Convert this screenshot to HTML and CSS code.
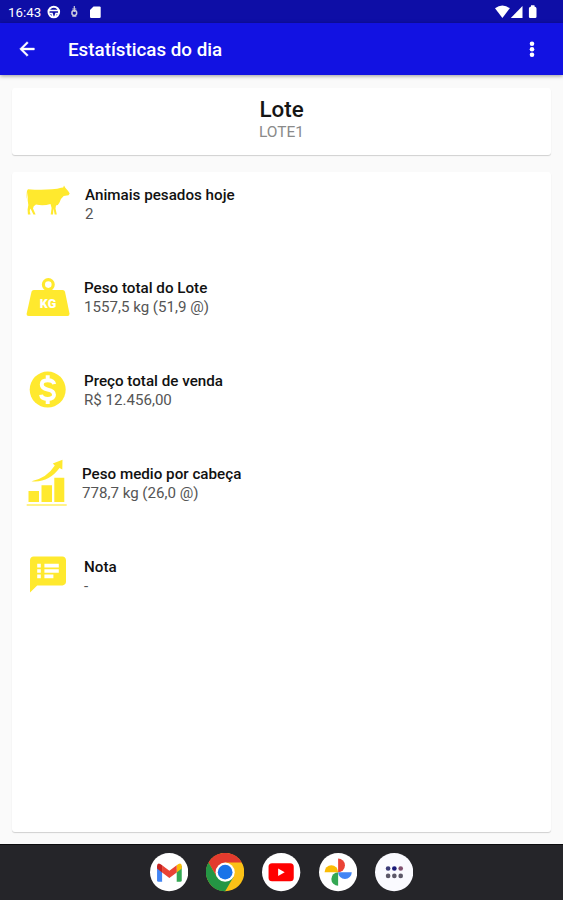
FILE: index.html
```html
<!DOCTYPE html>
<html lang="pt-BR">
<head>
    <meta charset="UTF-8">
    <meta name="viewport" content="width=device-width, initial-scale=1.0">
    <title>Estatísticas do dia</title>
    <link rel="stylesheet" href="styles.css">
</head>
<body>
    <div class="status-bar">
        <span class="time">16:43</span>
        <svg class="status-left" width="60" height="24" viewBox="0 0 60 24">
            <circle cx="6.8" cy="12" r="5.3" fill="none" stroke="#fff" stroke-width="2"/>
            <path d="M2 10.5h10M2.5 13.5h2.5l1 3.2M11 13.5H9l-1 3.2" fill="none" stroke="#fff" stroke-width="1.6"/>
            <circle cx="27.3" cy="13" r="2.4" fill="none" stroke="#ccd" stroke-width="1.5"/>
            <path d="M27.3 6v6M25.3 9h4M25.3 16.2h4" stroke="#ccd" stroke-width="1.2"/>
            <path d="M46.500 6.500h6q1.200 0 1.200 1v9.500q0 1-1.200 1h-8.300q-1.200 0-1.200-1V10z" fill="#fff"/>
        </svg>
        <svg class="status-right" width="46" height="24" viewBox="0 0 46 24" fill="#fff">
            <path d="M-1 8.3Q6.400 2.500 13.800 8.300L6.400 18z"/>
            <path d="M26.500 6v12H14.800z"/>
            <path d="M35 6.500V5.300h3.500v1.200q2 .3 2 2v8.200q0 1.300-1.300 1.300h-5q-1.300 0-1.300-1.300V8.500q0-1.700 2.100-2z"/>
        </svg>
    </div>

    <div class="app-bar">
        <svg class="back" width="22" height="22" viewBox="0 0 24 24" fill="#fff"><path d="M20 11H7.830l5.590-5.590L12 4l-8 8 8 8 1.410-1.410L7.830 13H20z" stroke="#fff" stroke-width=".5"/></svg>
        <h1>Estatísticas do dia</h1>
        <svg class="more" width="22" height="22" viewBox="0 0 24 24" fill="#fff"><circle cx="12" cy="6.200" r="2.500"/><circle cx="12" cy="12.200" r="2.500"/><circle cx="12" cy="18.200" r="2.500"/></svg>
    </div>

    <div class="content">
        <div class="card lote">
            <h2>Lote</h2>
            <p>LOTE1</p>
        </div>

        <div class="card stats">
            <div class="row cow">
                <svg width="46" height="50" viewBox="0 0 46 50">
                    <path d="M3 12.200Q16 13.300 27 12.300Q33 12 36 10.800L38.200 10.500L39 8.500L40.300 10.800Q43 13.500 44.700 16.600L43.500 18.300L38.700 19Q36 21 34.500 25.500Q33.500 28 31 28.600L30.500 31.500L31.800 37.500H29.700L28.500 31.500L28 37.500H25.700L26.600 31L25.500 27Q18 29.300 11 27.500Q8 29 8 31.500L10.600 37.500H8.400L5.500 31.500L4.700 34L5.500 37.500H2.900L2.600 32.500Q4 28 2.700 23.500V15Q2.200 19 1.700 22Q1.300 13 3 12.200z"/>
                </svg>
                <div class="info">
                    <h3>Animais pesados hoje</h3>
                    <p>2</p>
                </div>
            </div>
            <div class="row weight">
                <svg width="46" height="50" viewBox="0 0 46 50">
                    <circle cx="23.300" cy="14.600" r="4.900" fill="none" stroke="#ffe92e" stroke-width="3.200"/>
                    <path d="M8.800 20H37.700Q39.500 20 40 21.700L44.500 43.500Q44.700 46 42.500 46H3.800Q1.300 46 1.700 43.500L6.500 21.700Q7 20 8.800 20z"/>
                    <text class="kg" x="23" y="37.500" text-anchor="middle">KG</text>
                </svg>
                <div class="info">
                    <h3>Peso total do Lote</h3>
                    <p>1557,5 kg (51,9 @)</p>
                </div>
            </div>
            <div class="row price">
                <svg width="46" height="50" viewBox="0 0 46 50">
                    <g transform="translate(1.100 5) scale(1.800)">
                        <circle cx="12" cy="12" r="10"/>
                        <path d="M15.600 9Q15.200 6.800 12 6.800Q8.700 6.800 8.700 9.200Q8.700 11.300 12 12Q15.500 12.700 15.500 14.900Q15.500 17.200 12 17.200Q8.600 17.200 8.300 14.900M12 4v2.800M12 17.200V20" fill="none" stroke="#fff" stroke-width="2.200"/>
                    </g>
                </svg>
                <div class="info">
                    <h3>Preço total de venda</h3>
                    <p>R$ 12.456,00</p>
                </div>
            </div>
            <div class="row average">
                <svg width="46" height="50" viewBox="0 0 46 50">
                    <path d="M3.500 35h10.500v11H3.500zM16.500 29.300H27V46H16.500zM29.300 21.800h10V46h-10z"/>
                    <path d="M1.700 48.300h40v1.500h-40z" opacity=".75"/>
                    <path d="M6.500 25.200Q22 22 29.800 9.500L27.800 7.500L37.500 3.800L37.300 13.600L34.500 12Q23.500 27 6.500 25.200z"/>
                </svg>
                <div class="info">
                    <h3>Peso medio por cabeça</h3>
                    <p>778,7 kg (26,0 @)</p>
                </div>
            </div>
            <div class="row note">
                <svg width="46" height="50" viewBox="0 0 46 50">
                    <g transform="translate(1.400 4) scale(1.800)">
                        <path d="M20 2H4c-1.100 0-1.990.9-1.990 2L2 22l4-4h14c1.100 0 2-.9 2-2V4c0-1.100-.9-2-2-2zM8 14H6v-2h2v2zm0-3H6V9h2v2zm0-3H6V6h2v2zm7 6h-5v-2h5v2zm3-3h-8V9h8v2zm0-3h-8V6h8v2z"/>
                    </g>
                </svg>
                <div class="info">
                    <h3>Nota</h3>
                    <p>-</p>
                </div>
            </div>
        </div>
    </div>

    <div class="dock">
        <svg viewBox="0 0 38 38">
            <circle cx="19" cy="19" r="19" fill="#fff"/>
            <path d="M7 12.500l5 3.600v12.400H8.500Q7 28.500 7 27z" fill="#4285f4"/>
            <path d="M26.500 16.100l5-3.600V27q0 1.500-1.500 1.500h-3.500z" fill="#34a853"/>
            <path d="M26.500 12.200l1.800-1.400Q31.500 9.500 31.500 13v2.500l-5 3.800z" fill="#fbbc04"/>
            <path d="M12 12.200l7.200 5.500 7.300-5.500v7.100l-7.300 5.400-7.200-5.400z" fill="#ea4335"/>
            <path d="M7 15.500V13q0-3.500 3.200-2.200L12 12.200v7.100z" fill="#c5221f"/>
        </svg>
        <svg viewBox="0 0 38 38">
            <circle cx="19" cy="19" r="19" fill="#fbc116"/>
            <path d="M2.500 9.500A19 19 0 0 1 35.500 9.500H19L10.800 23.800z" fill="#e33b2e"/>
            <path d="M2.500 9.500A19 19 0 0 0 19 38L27.300 23.700H10.800z" fill="#249644"/>
            <circle cx="19" cy="19" r="9.500" fill="#fff"/>
            <circle cx="19" cy="19" r="7.300" fill="#1a73e8"/>
        </svg>
        <svg viewBox="0 0 38 38">
            <circle cx="19" cy="19" r="19" fill="#fff"/>
            <rect x="6.500" y="10.200" width="25" height="17.800" rx="3.500" fill="#f00"/>
            <path d="M16 15.300v7.400l6.500-3.700z" fill="#fff"/>
        </svg>
        <svg viewBox="0 0 38 38">
            <circle cx="19" cy="19" r="19" fill="#fff"/>
            <path d="M19 5.500A6.700 6.700 0 0 1 19 19z" fill="#ea4335"/>
            <path d="M32.500 19A6.700 6.700 0 0 1 19 19z" fill="#4285f4"/>
            <path d="M19 32.500A6.700 6.700 0 0 1 19 19z" fill="#34a853"/>
            <path d="M5.500 19A6.700 6.700 0 0 1 19 19z" fill="#fbbc04"/>
        </svg>
        <svg viewBox="0 0 38 38">
            <circle cx="19" cy="19" r="19" fill="#fafaff"/>
            <circle cx="13" cy="15.400" r="2.300" fill="#3b3b78"/>
            <circle cx="19.200" cy="15.400" r="2.300" fill="#1a1a78"/>
            <circle cx="25.500" cy="15.400" r="2.300" fill="#80506f"/>
            <circle cx="13" cy="22.700" r="2.300" fill="#5c5868"/>
            <circle cx="19.200" cy="22.700" r="2.300" fill="#5c5868"/>
            <circle cx="25.500" cy="22.700" r="2.300" fill="#5c5868"/>
        </svg>
    </div>
</body>
</html>
```
FILE: styles.css
```css
* {
    box-sizing: border-box;
}
body {
    margin: 0;
    height: 900px;
    display: flex;
    flex-direction: column;
    font-family: Roboto, sans-serif;
    background-color: #fafafa;
    overflow: hidden;
}
h1, h2, h3, p {
    margin: 0;
}
.status-bar {
    display: flex;
    align-items: center;
    height: 23px;
    padding: 0 21px 0 8px;
    background-color: #0e0ea6;
    color: #fff;
}
.time {
    width: 39px;
    font-size: 13.3px;
    line-height: 24px;
    padding-top: 2px;
}
.status-right {
    margin-left: auto;
    overflow: visible;
}
.app-bar {
    display: flex;
    align-items: center;
    height: 52px;
    padding: 0 20px 0 16px;
    background-color: #1212e2;
    color: #fff;
    box-shadow: 0 1px 4px rgba(0, 0, 0, 0.4);
}
.app-bar h1 {
    margin-left: 30px;
    padding-top: 2px;
    font-size: 18.8px;
    font-weight: 500;
}
.more {
    margin-left: auto;
}
.content {
    flex: 1;
    display: flex;
    flex-direction: column;
    gap: 17px;
    padding: 13px 12px 12px;
}
.card {
    background-color: #fff;
    border-radius: 3px;
    box-shadow: 0 1px 1px rgba(0, 0, 0, 0.17);
}
.lote {
    height: 67px;
    padding-top: 8px;
    text-align: center;
}
.lote h2 {
    font-size: 22.4px;
    line-height: 27px;
    font-weight: 500;
    color: #151515;
}
.lote p {
    font-size: 15.5px;
    line-height: 18px;
    color: #8a8a8a;
}
.stats {
    flex: 1;
    padding: 5px 13px;
}
.row {
    display: flex;
    height: 93px;
    gap: 13px;
}
.row svg {
    flex: none;
    fill: #ffe92e;
}
.cow {
    gap: 14px;
}
.average {
    gap: 11px;
}
.kg {
    fill: #fff;
    font-size: 12.5px;
    font-weight: 900;
}
.info {
    padding-top: 9px;
}
.info h3 {
    font-size: 15.2px;
    line-height: 18px;
    font-weight: 500;
    color: #111;
}
.info p {
    font-size: 15.1px;
    line-height: 20px;
    color: #555;
}
.dock {
    display: flex;
    justify-content: center;
    align-items: center;
    gap: 18px;
    height: 56px;
    background-color: #252529;
    border-top: 1px solid #0c0c0e;
}
.dock svg {
    width: 38.3px;
    height: 38.3px;
}
```
